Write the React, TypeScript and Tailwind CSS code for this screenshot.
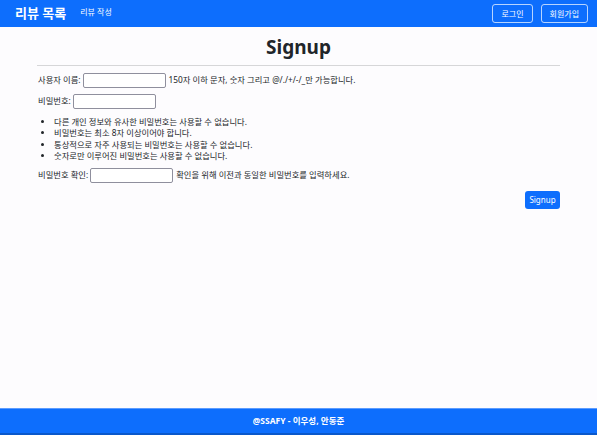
import React from 'react';

const font = { fontFamily: '"Noto Sans", "Noto Sans CJK KR", sans-serif' };

function Navbar() {
  return (
    <nav className="h-[27px] bg-[#0d6efd] flex items-center justify-between pl-[15px] pr-[9px]">
      <div className="flex items-center">
        <span className="text-white font-bold text-[13px] leading-none">리뷰 목록</span>
        <span className="text-white text-[8px] leading-none ml-[14px] mb-[3px]">리뷰 작성</span>
      </div>
      <div className="flex items-center gap-[8px]">
        <button className="h-[19px] px-[8px] border border-white/70 rounded-[3px] text-white text-[8px] leading-none">로그인</button>
        <button className="h-[19px] px-[8px] border border-white/70 rounded-[3px] text-white text-[8px] leading-none">회원가입</button>
      </div>
    </nav>
  );
}

function Field({ label, inputWidth, help }: { label: string; inputWidth: string; help?: string }) {
  return (
    <div className="flex items-center text-[8.3px] text-[#212529] pl-[1px]">
      <span>{label}</span>
      <input className={`${inputWidth} h-[15px] ml-[2px] border border-[#8f8f9d] rounded-[2px] bg-white`} />
      {help && <span className="ml-[3px]">{help}</span>}
    </div>
  );
}

export default function App() {
  return (
    <div className="h-screen flex flex-col bg-[#fdfcfe]" style={font}>
      <Navbar />
      <main className="flex-1 px-[37px]">
        <h1 className="text-center text-[19px] font-bold text-[#212529] leading-none mt-[11px]">Signup</h1>
        <hr className="mt-[8px] border-t border-[#d6d6d8]" />
        <div className="pt-[7px]">
          <Field label="사용자 이름:" inputWidth="w-[83px]" help="150자 이하 문자, 숫자 그리고 @/./+/-/_만 가능합니다." />
          <div className="mt-[6px]">
            <Field label="비밀번호:" inputWidth="w-[83px]" />
          </div>
          <ul className="list-disc pl-[17px] mt-[7px] text-[8.3px] text-[#212529] leading-[11.3px]">
            <li>다른 개인 정보와 유사한 비밀번호는 사용할 수 없습니다.</li>
            <li>비밀번호는 최소 8자 이상이어야 합니다.</li>
            <li>통상적으로 자주 사용되는 비밀번호는 사용할 수 없습니다.</li>
            <li>숫자로만 이루어진 비밀번호는 사용할 수 없습니다.</li>
          </ul>
          <div className="mt-[7px]">
            <Field label="비밀번호 확인:" inputWidth="w-[83px]" help="확인을 위해 이전과 동일한 비밀번호를 입력하세요." />
          </div>
          <div className="flex justify-end mt-[8px]">
            <button className="h-[18px] w-[35px] bg-[#0d6efd] text-white text-[8px] rounded-[3px] leading-none">Signup</button>
          </div>
        </div>
      </main>
      <footer className="h-[27px] bg-[#0d6efd] border-t border-[#5b9bff] border-b-2 border-b-[#0a58ca] flex items-center justify-center">
        <span className="text-white font-bold text-[8.5px]">@SSAFY - 이우성, 안동준</span>
      </footer>
    </div>
  );
}
